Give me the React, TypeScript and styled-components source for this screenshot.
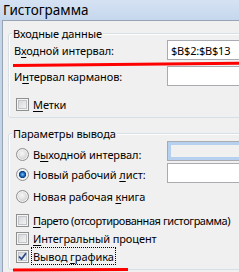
import React from "react";
import styled, { createGlobalStyle } from "styled-components";

const GlobalStyle = createGlobalStyle`
  html, body {
    margin: 0;
    padding: 0;
    background: #f0f0f0;
  }
`;

const Window = styled.div`
  position: relative;
  width: 239px;
  height: 272px;
  overflow: hidden;
  display: flex;
  flex-direction: column;
  background: #c4d5ea;
  font-family: "Noto Sans", "Liberation Sans", sans-serif;
  font-size: 11px;
  letter-spacing: -0.1px;
  color: #000;
`;

const TitleBar = styled.div`
  flex: none;
  height: 20px;
  display: flex;
  align-items: center;
  padding-left: 3px;
  background: linear-gradient(to bottom, #d5e2f3, #c6d7ed);
  font-size: 13.5px;
  letter-spacing: 0;
  line-height: 20px;
`;

const Frame = styled.div`
  flex: 1;
  display: flex;
  padding-left: 2px;
`;

const Client = styled.div`
  flex: 1;
  display: flex;
  flex-direction: column;
  background: #f0f0f0;
  border-top: 1px solid #97a4b4;
  border-left: 1px solid #97a4b4;
  padding-left: 5px;
`;

const Group = styled.div<{ $top: number }>`
  position: relative;
  flex: none;
  width: 300px;
  margin-top: ${({ $top }) => $top}px;
  border: 1px solid #d5dfe5;
  border-radius: 3px;
  box-shadow: inset 1px 1px 0 #fff;
  display: flex;
  flex-direction: column;
`;

const Caption = styled.span`
  position: absolute;
  top: -8px;
  left: 3px;
  padding: 0 1px;
  line-height: 15px;
  background: #f0f0f0;
`;

const Spacer = styled.div<{ $h: number }>`
  flex: none;
  height: ${({ $h }) => $h}px;
`;

const FieldRow = styled.div<{ $gap: number }>`
  display: flex;
  align-items: center;
  height: 20px;
  margin-top: ${({ $gap }) => $gap}px;
  padding-left: 5px;
`;

const FieldLabel = styled.span`
  width: 153px;
  line-height: 17px;
  padding-top: 1px;
`;

const TextBox = styled.div<{ $disabled?: boolean }>`
  box-sizing: border-box;
  width: 100px;
  height: 20px;
  border: 1px solid #a9abb0;
  background: ${({ $disabled }) => ($disabled ? "#f0f0f0" : "#fff")};
  box-shadow: ${({ $disabled }) =>
    $disabled ? "inset 0 0 0 3px #b5d1ef" : "none"};
  padding-left: 3px;
  line-height: 19px;
  font-size: 11px;
  letter-spacing: -0.2px;
  color: #000;
`;

const OptionRow = styled.div<{ $gap: number }>`
  display: flex;
  align-items: flex-start;
  height: 20px;
  margin-top: ${({ $gap }) => $gap}px;
  padding-left: 7px;
`;

const Option = styled.div<{ $shift?: number; $width?: number }>`
  display: flex;
  align-items: center;
  height: 18px;
  margin-top: ${({ $shift }) => $shift || 0}px;
  width: ${({ $width }) => ($width ? `${$width}px` : "auto")};
`;

const CheckRow = styled.div<{ $gap: number }>`
  display: flex;
  align-items: center;
  height: 18px;
  margin-top: ${({ $gap }) => $gap}px;
  padding-left: 7px;
`;

const Box = styled.span`
  flex: none;
  box-sizing: border-box;
  width: 13px;
  height: 13px;
  border: 1px solid #8e8f8f;
  background: linear-gradient(135deg, #cfd1d4 0%, #eeeeee 70%, #f8f8f8 100%);
  box-shadow: inset 0 0 0 1px #f4f4f4, inset 0 0 0 2px #c2c5c9;
  display: flex;
  align-items: center;
  justify-content: center;
`;

const Radio = styled.span<{ $checked?: boolean }>`
  flex: none;
  box-sizing: border-box;
  width: 13px;
  height: 13px;
  border-radius: 50%;
  border: 1px solid #8e8f8f;
  background: ${({ $checked }) =>
    $checked
      ? "radial-gradient(circle at 50% 50%, #7ec2f2 0px, #1b6cc2 2px, #0d3f7e 3.2px, #e9eef3 4px, #f4f4f4 6px)"
      : "radial-gradient(circle at 45% 40%, #f7f7f7 0px, #e6e6e6 3px, #cfd1d4 6px)"};
  box-shadow: inset 0 0 0 1px #f2f2f2;
`;

const OptionText = styled.span<{ $focused?: boolean; $tight?: boolean }>`
  margin-left: 2px;
  padding: 1px 1px 0;
  line-height: 15px;
  letter-spacing: ${({ $tight }) => ($tight ? "-0.45px" : "inherit")};
  border: 1px ${({ $focused }) => ($focused ? "dotted #000" : "solid transparent")};
  white-space: nowrap;
`;

const Key = styled.span`
  text-decoration: underline;
  text-underline-offset: 2px;
`;

const Annotations = styled.svg`
  position: absolute;
  left: 0;
  top: 0;
  pointer-events: none;
`;

const Check = () => (
  <svg width="9" height="9" viewBox="0 0 9 9">
    <path
      d="M1 4.5 L3.5 7.2 L8 1.2"
      fill="none"
      stroke="#2a4a8a"
      strokeWidth="1.8"
    />
  </svg>
);

const App = () => (
  <>
    <GlobalStyle />
    <Window>
      <TitleBar>Гистограмма</TitleBar>
      <Frame>
        <Client>
          <Group $top={12}>
            <Caption>Входные данные</Caption>
            <Spacer $h={6} />
            <FieldRow $gap={0}>
              <FieldLabel>
                В<Key>х</Key>одной интервал:
              </FieldLabel>
              <TextBox>$B$2:$B$13</TextBox>
            </FieldRow>
            <FieldRow $gap={6}>
              <FieldLabel>
                И<Key>н</Key>тервал карманов:
              </FieldLabel>
              <TextBox />
            </FieldRow>
            <CheckRow $gap={9}>
              <Box />
              <OptionText>
                <Key>М</Key>етки
              </OptionText>
            </CheckRow>
            <Spacer $h={4} />
          </Group>

          <Group $top={15}>
            <Caption>Параметры вывода</Caption>
            <Spacer $h={7} />
            <OptionRow $gap={0}>
              <Option $shift={4} $width={151}>
                <Radio />
                <OptionText>
                  В<Key>ы</Key>ходной интервал:
                </OptionText>
              </Option>
              <TextBox $disabled />
            </OptionRow>
            <OptionRow $gap={2}>
              <Option $shift={2} $width={151}>
                <Radio $checked />
                <OptionText>
                  Новый рабочий <Key>л</Key>ист:
                </OptionText>
              </Option>
              <TextBox />
            </OptionRow>
            <CheckRow $gap={4}>
              <Radio />
              <OptionText>
                Новая рабочая <Key>к</Key>нига
              </OptionText>
            </CheckRow>
            <CheckRow $gap={6}>
              <Box />
              <OptionText $tight>
                <Key>П</Key>арето (отсортированная гистограмма)
              </OptionText>
            </CheckRow>
            <CheckRow $gap={0}>
              <Box />
              <OptionText>
                <Key>И</Key>нтегральный процент
              </OptionText>
            </CheckRow>
            <CheckRow $gap={0}>
              <Box>
                <Check />
              </Box>
              <OptionText $focused>
                Вывод <Key>г</Key>рафика
              </OptionText>
            </CheckRow>
            <Spacer $h={4} />
          </Group>
        </Client>
      </Frame>
      <Annotations width="239" height="272" viewBox="0 0 239 272">
        <path
          d="M13 65.5 C 50 65, 120 63.8, 239 63.2"
          fill="none"
          stroke="#ff0000"
          strokeWidth="3"
        />
        <path d="M13 270 L128 269.6" fill="none" stroke="#ff0000" strokeWidth="3" />
      </Annotations>
    </Window>
  </>
);

export default App;
